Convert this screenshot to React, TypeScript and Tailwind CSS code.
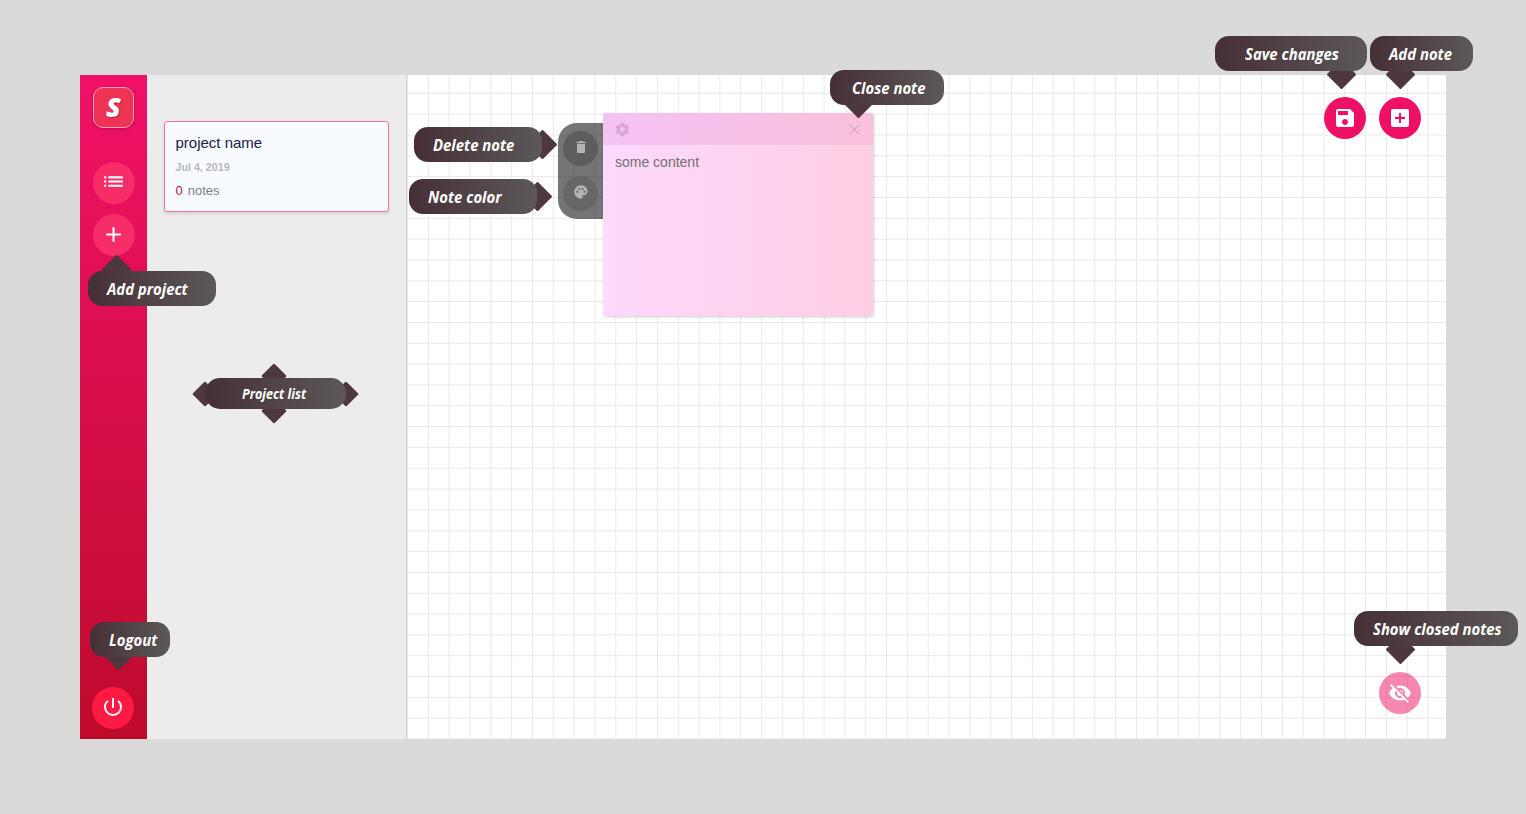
import type { ReactNode } from "react";
import {
  MdAdd,
  MdAddBox,
  MdDelete,
  MdList,
  MdPalette,
  MdPowerSettingsNew,
  MdSave,
  MdSettings,
  MdVisibilityOff,
} from "react-icons/md";

type CalloutProps = {
  place: string;
  arrows: string[];
  text: string;
  pill?: string;
  children: ReactNode;
};

function Callout({ place, arrows, text, pill = "rounded-[14px]", children }: CalloutProps) {
  return (
    <div className={`absolute ${place}`}>
      {arrows.map((arrow) => (
        <span key={arrow} className={`absolute rotate-45 rounded-[1px] bg-[#4e373f] ${arrow}`} />
      ))}
      <div
        className={`relative flex h-full items-center bg-linear-to-r from-[#462f36] to-[#5b5858] font-['Open_Sans',sans-serif] font-bold italic whitespace-nowrap text-white ${pill}`}
      >
        <span className={`inline-block origin-left scale-x-[0.93] ${text}`}>{children}</span>
      </div>
    </div>
  );
}

function RoundButton({ tone, label, children }: { tone: string; label: string; children: ReactNode }) {
  return (
    <button
      aria-label={label}
      className={`flex size-[42px] shrink-0 items-center justify-center rounded-full text-white ${tone}`}
    >
      {children}
    </button>
  );
}

function Sidebar() {
  return (
    <nav className="flex w-[67px] shrink-0 flex-col items-start bg-linear-to-b from-[#f11067] to-[#be0a2a] pt-3 pb-[10px] pl-[13px]">
      <div className="flex size-[41px] items-center justify-center rounded-[10px] border border-[#ff9fb9] bg-[#ee3354] shadow-[0_1px_3px_rgba(90,0,30,0.35)]">
        <span className="-mt-[3px] font-['Open_Sans',sans-serif] text-[27px] leading-none font-extrabold text-white italic [text-shadow:1px_1px_1px_rgba(120,0,30,0.4)]">
          S
        </span>
      </div>
      <div className="mt-[34px] flex flex-col gap-[10px]">
        <RoundButton label="Projects" tone="bg-[#f62d66]">
          <MdList size={25} className="-mt-[3px] mr-[2px]" />
        </RoundButton>
        <RoundButton label="Add project" tone="bg-[#f62d66]">
          <MdAdd size={25} className="-mt-[2px] mr-[2px]" />
        </RoundButton>
      </div>
      <div className="mt-auto -ml-px">
        <RoundButton label="Logout" tone="bg-[#ff1a44]">
          <MdPowerSettingsNew size={24} className="-mt-[3px]" />
        </RoundButton>
      </div>
    </nav>
  );
}

function ProjectPanel() {
  return (
    <aside className="w-[260px] shrink-0 border-r border-[#cfcfcf] bg-[#ececec] pt-[46px] pl-[17px]">
      <div className="h-[91px] w-[225px] rounded-[3px] border border-[#fc6f9c] bg-[#f7faff] pt-[11px] pl-[10.5px] shadow-[0_2px_3px_rgba(0,0,0,0.1)]">
        <h2 className="text-[15px] leading-5 text-[#1d2143]">project name</h2>
        <p className="mt-[6px] text-[10.7px] leading-4 font-bold text-[#b7b8bb]">Jul 4, 2019</p>
        <p className="mt-[8px] text-[13px] leading-4 text-[#808286]">
          <span className="mr-[5px] inline-block text-[#c4143a]">0</span>
          notes
        </p>
      </div>
    </aside>
  );
}

function Note() {
  return (
    <div className="flex h-[203px] items-start">
      <div className="mt-[10px] flex h-24 w-[45px] flex-col gap-[10px] rounded-l-[19px] bg-black/54 pt-2 pl-[5px] text-[#b4b4b4]">
        <span className="flex size-[35px] items-center justify-center rounded-full bg-[#5d5d5d]">
          <MdDelete size={16} className="-mt-[3px]" />
        </span>
        <span className="flex size-[35px] items-center justify-center rounded-full bg-[#666666]">
          <MdPalette size={16} className="-mt-[4px]" />
        </span>
      </div>
      <article className="h-[203px] w-[270px] rounded-[3px] bg-linear-to-r from-[#fdd9fd] to-[#ffcde3] shadow-[1px_1px_3px_rgba(0,0,0,0.2)]">
        <header className="flex h-8 items-center justify-between rounded-t-[3px] bg-linear-to-r from-[#f5c2f5] to-[#f8c0da] pr-[13px] pl-[11px] text-[#dba6d6]">
          <MdSettings size={17} />
          <svg width="11" height="11" viewBox="0 0 11 11" stroke="#d9a3bf" strokeWidth="1.1">
            <path d="M.7.7l9.6 9.6M10.3.7L.7 10.3" />
          </svg>
        </header>
        <p className="pt-[9px] pl-3 text-[14px] leading-4 text-[#717171]">some content</p>
      </article>
    </div>
  );
}

function Canvas() {
  return (
    <main className="flex flex-1 justify-between bg-white bg-[linear-gradient(to_right,#e9e9e9_1.3px,transparent_1.3px),linear-gradient(to_bottom,#e9e9e9_1.3px,transparent_1.3px)] bg-[length:20.83px_20.83px] bg-[position:0px_-3px] pr-[25px] pl-[151px]">
      <div className="pt-[38px]">
        <Note />
      </div>
      <div className="flex flex-col items-end justify-between pt-[22px] pb-[25px]">
        <div className="flex gap-[13px]">
          <RoundButton label="Save changes" tone="bg-[#ee1064]">
            <MdSave size={24} />
          </RoundButton>
          <RoundButton label="Add note" tone="bg-[#ee1064]">
            <MdAddBox size={24} />
          </RoundButton>
        </div>
        <RoundButton label="Show closed notes" tone="bg-[#ee1064]/50">
          <MdVisibilityOff size={24} />
        </RoundButton>
      </div>
    </main>
  );
}

export default function App() {
  return (
    <div className="relative h-[814px] w-[1526px] overflow-hidden bg-[#dadad8] px-20 py-[75px] font-['Liberation_Sans',Arial,sans-serif]">
      <div className="flex h-[664px]">
        <Sidebar />
        <ProjectPanel />
        <Canvas />
      </div>

      <Callout place="top-[271px] left-[88px] h-[35px] w-32" arrows={["size-[21px] -top-[12px] left-[17.5px]"]} text="ml-[19px] text-[16px]">
        Add project
      </Callout>
      <Callout
        place="top-[378px] left-[205px] h-[31px] w-[141px]"
        pill="rounded-[15px]"
        arrows={[
          "size-[18px] -top-[11.5px] left-[60px]",
          "size-[18px] top-[24px] left-[60px]",
          "size-[18px] top-[6.5px] -left-[9px]",
          "size-[18px] top-[6.5px] left-[132px]",
        ]}
        text="ml-[37px] mt-px text-[13.5px]"
      >
        Project list
      </Callout>
      <Callout place="top-[622px] left-[90px] h-[35px] w-20" arrows={["size-[21px] top-[22.5px] left-[17.5px]"]} text="ml-[19px] text-[16px]">
        Logout
      </Callout>
      <Callout place="top-[127px] left-[414px] h-[35px] w-32" arrows={["size-[21px] top-[6.5px] left-[117.5px]"]} text="ml-[19px] text-[16px]">
        Delete note
      </Callout>
      <Callout place="top-[179px] left-[409px] h-[35px] w-32" arrows={["size-[21px] top-[6.5px] left-[117.5px]"]} text="ml-[19px] text-[16px]">
        Note color
      </Callout>
      <Callout place="top-[70px] left-[830px] h-[35px] w-[114px]" arrows={["size-[21px] top-[22.5px] left-[17.5px]"]} text="ml-[22px] text-[16px]">
        Close note
      </Callout>
      <Callout place="top-[36px] left-[1215px] h-[35px] w-[152px]" arrows={["size-[21px] top-[28px] left-[115.5px]"]} text="ml-[30px] text-[16px]">
        Save changes
      </Callout>
      <Callout place="top-[36px] left-[1370px] h-[35px] w-[103px]" arrows={["size-[21px] top-[28px] left-[19.5px]"]} text="ml-[19px] text-[16px]">
        Add note
      </Callout>
      <Callout place="top-[611px] left-[1354px] h-[35px] w-[164px]" arrows={["size-[21px] top-[28px] left-[35.5px]"]} text="ml-[19px] text-[16px]">
        Show closed notes
      </Callout>
    </div>
  );
}
